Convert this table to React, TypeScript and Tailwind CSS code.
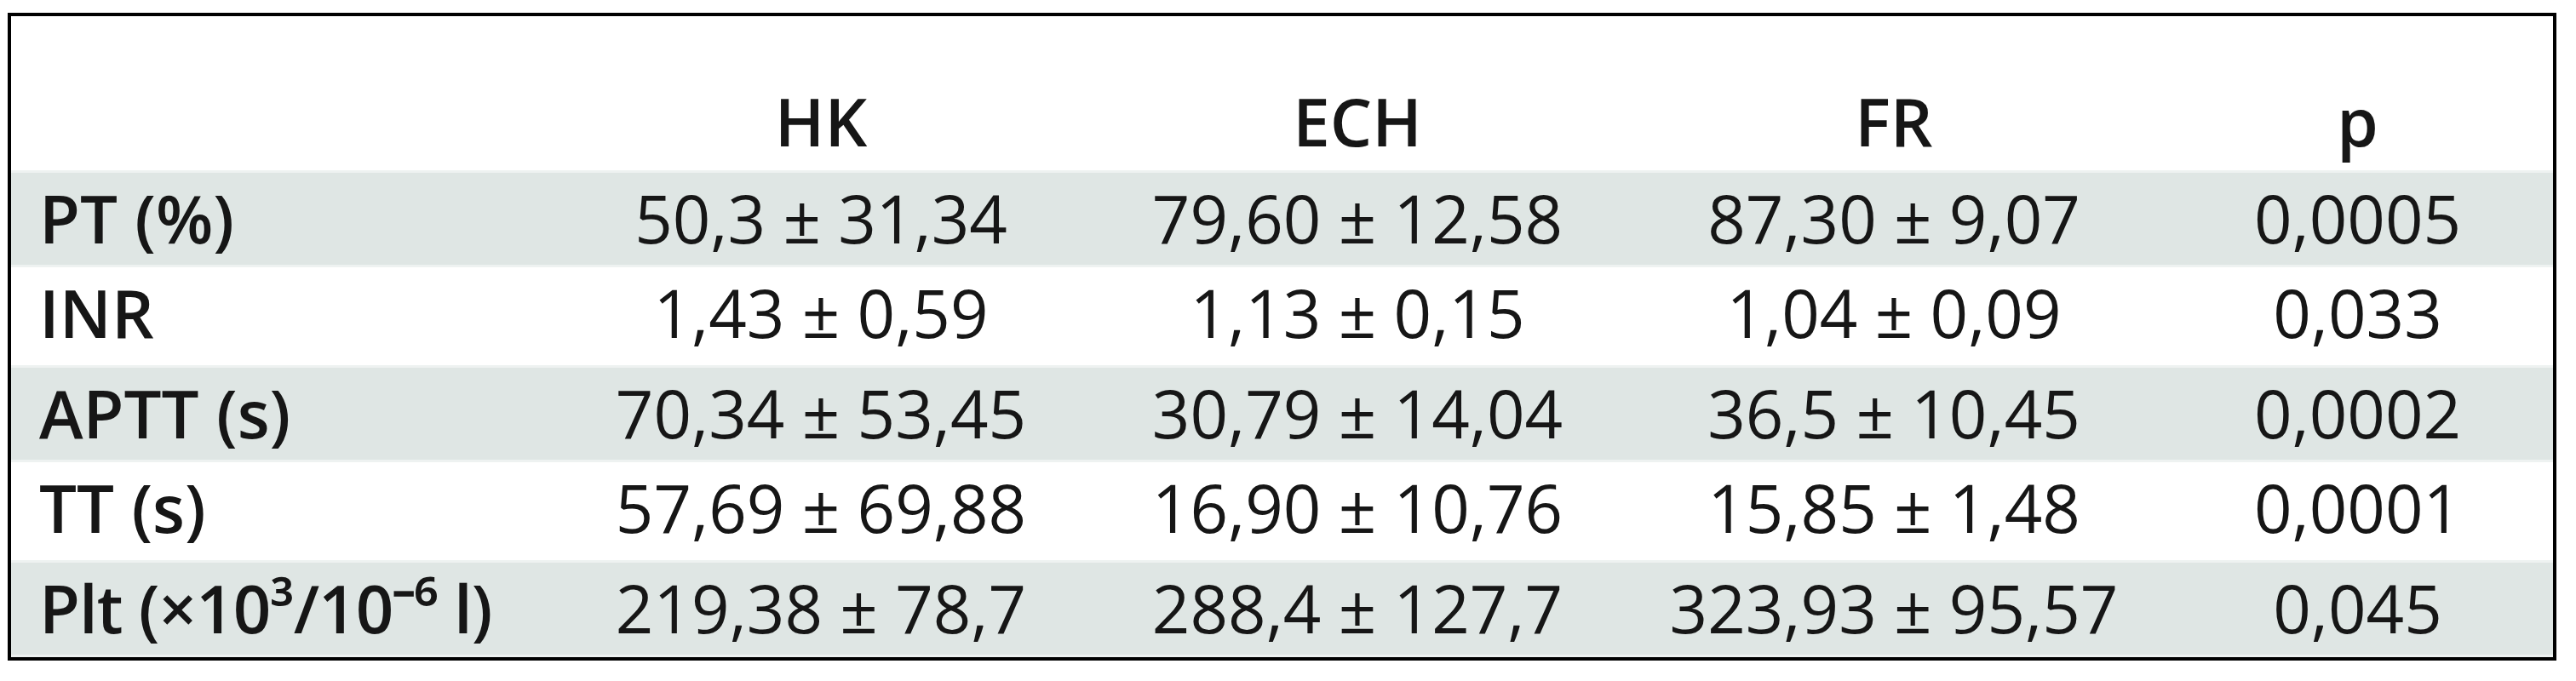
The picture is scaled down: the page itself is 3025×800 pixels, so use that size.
import React from "react";

const rows: { label: React.ReactNode; hk: string; ech: string; fr: string; p: string; shaded: boolean }[] = [
  { label: "PT (%)", hk: "50,3 ± 31,34", ech: "79,60 ± 12,58", fr: "87,30 ± 9,07", p: "0,0005", shaded: true },
  { label: "INR", hk: "1,43 ± 0,59", ech: "1,13 ± 0,15", fr: "1,04 ± 0,09", p: "0,033", shaded: false },
  { label: "APTT (s)", hk: "70,34 ± 53,45", ech: "30,79 ± 14,04", fr: "36,5 ± 10,45", p: "0,0002", shaded: true },
  { label: "TT (s)", hk: "57,69 ± 69,88", ech: "16,90 ± 10,76", fr: "15,85 ± 1,48", p: "0,0001", shaded: false },
  {
    label: <span className="tracking-[-1px]">Plt (×10³/10⁻⁶ l)</span>,
    hk: "219,38 ± 78,7",
    ech: "288,4 ± 127,7",
    fr: "323,93 ± 95,57",
    p: "0,045",
    shaded: true,
  },
];

const cols = "grid grid-cols-[636px_630px_630px_630px_1fr]";

export default function App() {
  return (
    <div className="w-[3025px] h-[800px] bg-white pt-[15px] pl-[9px] font-['Open_Sans',sans-serif] text-[78px] text-[#161616]">
      <div className="w-[2993px] h-[761px] border-4 border-black flex flex-col">
        <div className={`${cols} h-[181px] items-end`}>
          <div />
          {["HK", "ECH", "FR", "p"].map((h) => (
            <div key={h} className="h-[114px] leading-[112px] text-center font-semibold">
              {h}
            </div>
          ))}
        </div>
        {rows.map((r, i) => (
          <div
            key={i}
            className={`${cols} h-[114.4px] leading-[106px] ${
              r.shaded ? "bg-[#dfe6e4] border-y-[3px] border-[#eef2f1]" : "bg-white"
            }`}
          >
            <div className="pl-[33px] font-semibold whitespace-nowrap">{r.label}</div>
            <div className="text-center whitespace-nowrap">{r.hk}</div>
            <div className="text-center whitespace-nowrap">{r.ech}</div>
            <div className="text-center whitespace-nowrap">{r.fr}</div>
            <div className="text-center whitespace-nowrap">{r.p}</div>
          </div>
        ))}
      </div>
    </div>
  );
}
